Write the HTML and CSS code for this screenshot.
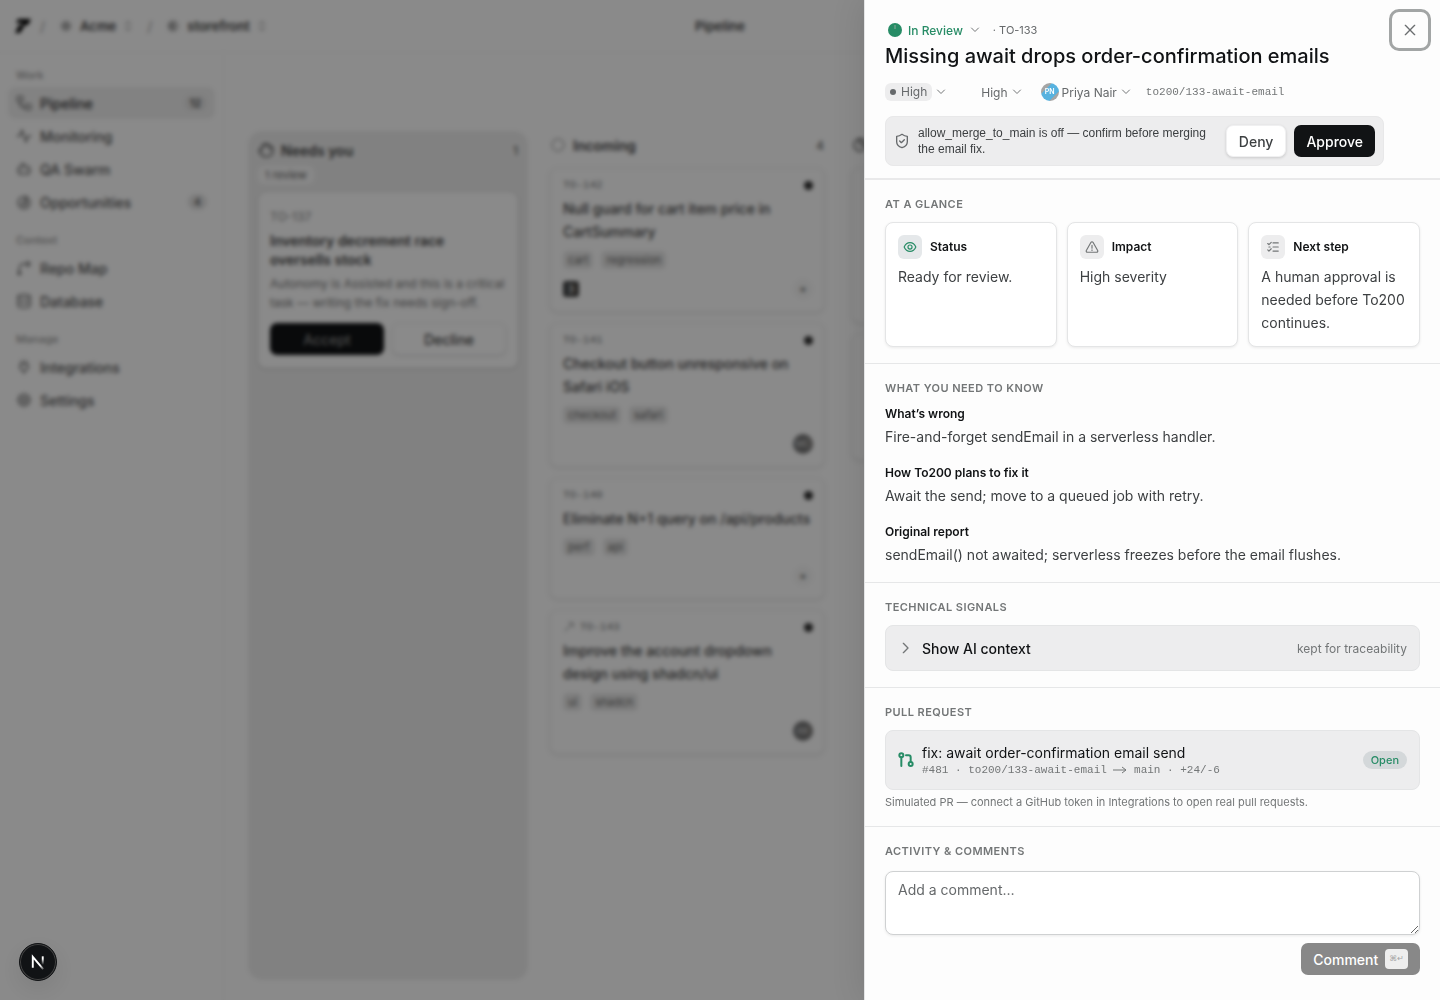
FILE: index.html
```html
<!DOCTYPE html>
<html lang="en">
<head>
  <meta charset="UTF-8" />
  <meta name="viewport" content="width=device-width, initial-scale=1.0"/>
  <title>Pipeline - storefront</title>
  <link rel="stylesheet" href="styles.css">
</head>
<body>

  <div class="app">
    <header class="topbar">
      <div class="crumbs">
        <svg class="logo" viewBox="0 0 18 18"><path d="M4 2h13l-3 6h-3l-5 8H1l4-8h3l1-2H2z" fill="#000"/></svg>
        <span class="slash">/</span>
        <button class="crumb">
          <svg class="icon" viewBox="0 0 24 24"><circle cx="12" cy="12" r="9" fill="#ddd" stroke="none"/><path d="M12 7l5 5-5 5-5-5z"/></svg>
          Acme
          <svg class="icon small" viewBox="0 0 24 24"><path d="M7 9l5-6 5 6M7 15l5 6 5-6"/></svg>
        </button>
        <span class="slash">/</span>
        <button class="crumb">
          <svg class="icon" viewBox="0 0 24 24"><circle cx="12" cy="12" r="9" fill="#ccc" stroke="none"/><path d="M12 6v12M8 9v6"/></svg>
          storefront
          <svg class="icon small" viewBox="0 0 24 24"><path d="M7 9l5-6 5 6M7 15l5 6 5-6"/></svg>
        </button>
      </div>
      <h1 class="page-title">Pipeline</h1>
      <div></div>
    </header>

    <div class="workspace">
      <nav class="sidebar">
        <div class="nav-group">
          <h2 class="nav-label">Work</h2>
          <a href="#" class="nav-item active">
            <svg class="icon" viewBox="0 0 24 24"><rect x="2" y="2" width="8" height="8" rx="2"/><path d="M6 10v4a4 4 0 0 0 4 4h4"/><rect x="14" y="14" width="8" height="8" rx="2"/></svg>
            Pipeline <span class="count">12</span>
          </a>
          <a href="#" class="nav-item">
            <svg class="icon" viewBox="0 0 24 24"><path d="M2 12h4l3-9 6 18 3-9h4"/></svg>
            Monitoring
          </a>
          <a href="#" class="nav-item">
            <svg class="icon" viewBox="0 0 24 24"><path d="M12 8V4H8M2 14h2M20 14h2M9 13v2M15 13v2"/><rect x="4" y="8" width="16" height="12" rx="2"/></svg>
            QA Swarm
          </a>
          <a href="#" class="nav-item">
            <svg class="icon" viewBox="0 0 24 24"><circle cx="12" cy="13" r="9"/><path d="M12 13l4-10M8 13a4 4 0 1 0 4-4"/></svg>
            Opportunities <span class="count">4</span>
          </a>
        </div>
        <div class="nav-group">
          <h2 class="nav-label">Context</h2>
          <a href="#" class="nav-item">
            <svg class="icon" viewBox="0 0 24 24"><path d="M5 21v-9a6 6 0 0 1 6-6h10M17 2l4 4-4 4"/><circle cx="5" cy="20" r="2"/></svg>
            Repo Map
          </a>
          <a href="#" class="nav-item">
            <svg class="icon" viewBox="0 0 24 24"><ellipse cx="12" cy="5" rx="9" ry="3"/><path d="M3 5v14a9 3 0 0 0 18 0V5M3 12a9 3 0 0 0 18 0"/></svg>
            Database
          </a>
        </div>
        <div class="nav-group">
          <h2 class="nav-label">Manage</h2>
          <a href="#" class="nav-item">
            <svg class="icon" viewBox="0 0 24 24"><path d="M12 22v-5M9 7V2M15 7V2M6 8h12v4a5 5 0 0 1-5 5h-2a5 5 0 0 1-5-5z"/></svg>
            Integrations
          </a>
          <a href="#" class="nav-item">
            <svg class="icon" viewBox="0 0 24 24"><circle cx="12" cy="12" r="8"/><circle cx="12" cy="12" r="3"/><path d="M12 2v2M12 20v2M2 12h2M20 12h2M5 5l1 1M18 18l1 1M5 19l1-1M18 6l1-1"/></svg>
            Settings
          </a>
        </div>
      </nav>

      <main class="board">
        <section class="column needs">
          <div class="column-head">
            <svg class="icon" viewBox="0 0 24 24"><path d="M18 11V6a2 2 0 0 0-4 0V4a2 2 0 0 0-4 0v2a2 2 0 0 0-4 0v6l-2-1a2 2 0 0 0-2 3l3 5a8 8 0 0 0 7 3h2a8 8 0 0 0 8-8V9a2 2 0 0 0-4 0"/></svg>
            Needs you <span class="total">1</span>
          </div>
          <span class="review-chip">1 review</span>
          <article class="ask">
            <div class="task-id">TO-137</div>
            <h3>Inventory decrement race oversells stock</h3>
            <p>Autonomy is Assisted and this is a critical task — writing the fix needs sign-off.</p>
            <div class="ask-actions">
              <button class="btn dark">Accept</button>
              <button class="btn light">Decline</button>
            </div>
          </article>
        </section>

        <section class="column">
          <div class="column-head">
            <svg class="icon faint" viewBox="0 0 24 24"><circle cx="12" cy="12" r="9" stroke-dasharray="4 3"/></svg>
            Incoming <span class="total">4</span>
          </div>
          <div class="tasks">
            <article class="task">
              <div class="task-id">TO-142 <i class="priority"></i></div>
              <h3>Null guard for cart item price in CartSummary</h3>
              <div class="tags"><span>cart</span><span>regression</span></div>
              <div class="task-foot"><span class="source">3</span><span class="assign">+</span></div>
            </article>
            <article class="task">
              <div class="task-id">TO-141 <i class="priority"></i></div>
              <h3>Checkout button unresponsive on Safari iOS</h3>
              <div class="tags"><span>checkout</span><span>safari</span></div>
              <div class="task-foot"><span class="person">MC</span></div>
            </article>
            <article class="task">
              <div class="task-id">TO-140 <i class="priority"></i></div>
              <h3>Eliminate N+1 query on /api/products</h3>
              <div class="tags"><span>perf</span><span>api</span></div>
              <div class="task-foot"><span class="assign">+</span></div>
            </article>
            <article class="task">
              <div class="task-id">
                <svg class="icon small" viewBox="0 0 24 24"><path d="M4 20L15 9M12 4h8v8"/></svg>
                TO-143 <i class="priority"></i>
              </div>
              <h3>Improve the account dropdown design using shadcn/ui</h3>
              <div class="tags"><span>ui</span><span>shadcn</span></div>
              <div class="task-foot"><span class="person">AK</span></div>
            </article>
          </div>
        </section>

        <section class="column">
          <div class="column-head">
            <svg class="icon" viewBox="0 0 24 24"><circle cx="12" cy="12" r="9"/><path d="M12 12V3a9 9 0 0 1 9 9z"/></svg>
          </div>
          <div class="tasks">
            <article class="task tall"></article>
            <article class="task short"></article>
          </div>
        </section>
      </main>
    </div>
  </div>

  <div class="overlay"></div>

  <button class="dev-badge" aria-label="Open developer tools">
    <svg viewBox="0 0 38 38">
      <defs>
        <linearGradient id="fade" x1="0" y1="0" x2="0" y2="1"><stop offset="0.3" stop-color="#fff"/><stop offset="1" stop-color="#fff" stop-opacity="0"/></linearGradient>
        <linearGradient id="fadeEnd" x1="0" y1="0" x2="1" y2="1"><stop offset="0.7" stop-color="#fff"/><stop offset="1" stop-color="#fff" stop-opacity="0.3"/></linearGradient>
      </defs>
      <path d="M13.500 25V13.500L24.500 26.500" fill="none" stroke="url(#fadeEnd)" stroke-width="2"/>
      <rect x="23" y="13" width="2" height="9" fill="url(#fade)"/>
    </svg>
  </button>

  <aside class="drawer" role="dialog" aria-labelledby="drawerTitle">
    <header class="drawer-head">
      <button class="close" aria-label="Close">
        <svg class="icon" viewBox="0 0 24 24"><path d="M5 5l14 14M19 5L5 19"/></svg>
      </button>
      <div class="status-row">
        <button class="status">
          <svg class="status-dot" viewBox="0 0 14 14"><circle cx="7" cy="7" r="7" fill="#278c66"/><path d="M7 2v4" stroke="#8fa99c"/></svg>
          In Review
          <svg class="icon chevron" viewBox="0 0 24 24"><path d="M5 8l7 7 7-7"/></svg>
        </button>
        <span class="ticket">· TO-133</span>
      </div>
      <h2 class="drawer-title" id="drawerTitle">Missing await drops order-confirmation emails</h2>
      <div class="meta">
        <button class="pick"><span class="level"><i></i>High</span><svg class="icon chevron" viewBox="0 0 24 24"><path d="M5 8l7 7 7-7"/></svg></button>
        <button class="pick severity">High<svg class="icon chevron" viewBox="0 0 24 24"><path d="M5 8l7 7 7-7"/></svg></button>
        <button class="pick"><span class="avatar">PN</span>Priya Nair<svg class="icon chevron" viewBox="0 0 24 24"><path d="M5 8l7 7 7-7"/></svg></button>
        <code>to200/133-await-email</code>
      </div>
      <div class="gate">
        <svg class="icon" viewBox="0 0 24 24"><path d="M20 13c0 5-3.500 7.500-8 9-4.500-1.500-8-4-8-9V5c3 0 5.500-1 8-3 2.500 2 5 3 8 3z"/><path d="M8.500 12l2.500 2.500 4.500-4.500"/></svg>
        <p>allow_merge_to_main is off — confirm before merging the email fix.</p>
        <button class="btn light">Deny</button>
        <button class="btn dark">Approve</button>
      </div>
    </header>

    <section class="block">
      <h3 class="label">At a glance</h3>
      <div class="glance">
        <div class="glance-card">
          <h4><span class="tile green"><svg class="icon" viewBox="0 0 24 24"><path d="M2 12c2-5 6-7.500 10-7.500S20 7 22 12c-2 5-6 7.500-10 7.500S4 17 2 12z"/><circle cx="12" cy="12" r="3.500"/></svg></span>Status</h4>
          <p>Ready for review.</p>
        </div>
        <div class="glance-card">
          <h4><span class="tile"><svg class="icon" viewBox="0 0 24 24"><path d="M10.300 4L2.300 18a2 2 0 0 0 1.700 3h16a2 2 0 0 0 1.700-3L13.700 4a2 2 0 0 0-3.400 0zM12 9v5M12 17v1"/></svg></span>Impact</h4>
          <p>High severity</p>
        </div>
        <div class="glance-card">
          <h4><span class="tile"><svg class="icon" viewBox="0 0 24 24"><path d="M12 5h9M12 12h9M12 19h9M3 17l2 2 4-4M3 6l2 2 4-4M5 12h2"/></svg></span>Next step</h4>
          <p>A human approval is needed before To200 continues.</p>
        </div>
      </div>
    </section>

    <section class="block">
      <h3 class="label">What you need to know</h3>
      <div class="facts">
        <div>
          <h4>What’s wrong</h4>
          <p>Fire-and-forget sendEmail in a serverless handler.</p>
        </div>
        <div>
          <h4>How To200 plans to fix it</h4>
          <p>Await the send; move to a queued job with retry.</p>
        </div>
        <div>
          <h4>Original report</h4>
          <p>sendEmail() not awaited; serverless freezes before the email flushes.</p>
        </div>
      </div>
    </section>

    <section class="block">
      <h3 class="label">Technical signals</h3>
      <button class="context">
        <svg class="icon" viewBox="0 0 24 24"><path d="M8 5l7 7-7 7"/></svg>
        Show AI context
        <span>kept for traceability</span>
      </button>
    </section>

    <section class="block">
      <h3 class="label">Pull request</h3>
      <a href="#" class="pr">
        <svg class="icon" viewBox="0 0 24 24"><circle cx="5" cy="5" r="3"/><circle cx="19" cy="18" r="3"/><path d="M5 8v13M12 5h4a3 3 0 0 1 3 3v7"/></svg>
        <div class="pr-text">
          <div class="pr-title">fix: await order-confirmation email send</div>
          <div class="pr-meta">#481 · to200/133-await-email <svg class="arrow" viewBox="0 0 14 10"><path d="M0 5h13M9 2l4 3-4 3"/></svg> main · +24/-6</div>
        </div>
        <span class="open">Open</span>
      </a>
      <p class="note">Simulated PR — connect a GitHub token in Integrations to open real pull requests.</p>
    </section>

    <section class="block">
      <h3 class="label"><label for="comment">Activity &amp; comments</label></h3>
      <textarea id="comment" class="comment" placeholder="Add a comment…"></textarea>
      <div class="comment-actions">
        <button class="btn send">Comment <kbd>⌘↵</kbd></button>
      </div>
    </section>
  </aside>

</body>
</html>
```
FILE: styles.css
```css
* {
  box-sizing: border-box;
}

body {
  margin: 0;
  font-family: Inter, "Liberation Sans", sans-serif;
  font-size: 14px;
  color: #111315;
  background: #fff;
  overflow: hidden;
}

h1, h2, h3, h4, p {
  margin: 0;
}

button, textarea {
  font: inherit;
  color: inherit;
}

button {
  border: none;
  background: none;
  padding: 0;
  cursor: pointer;
}

a {
  color: inherit;
  text-decoration: none;
}

code, .pr-meta, .task .task-id {
  font-family: "Liberation Mono", monospace;
  font-size: 11px;
  color: #737677;
}

.icon {
  width: 16px;
  height: 16px;
  flex: none;
  fill: none;
  stroke: currentColor;
  stroke-width: 2;
  stroke-linecap: round;
  stroke-linejoin: round;
}

.icon.small,
.icon.chevron {
  width: 12px;
  height: 12px;
}

/* App behind the drawer */
.app {
  height: 100vh;
  display: flex;
  flex-direction: column;
  color: #444;
}

.topbar {
  display: grid;
  grid-template-columns: 1fr auto 1fr;
  align-items: center;
  height: 53px;
  padding: 0 14px;
  border-bottom: 1px solid #f9f9f9;
}

.crumbs {
  display: flex;
  align-items: center;
  gap: 8px;
}

.logo {
  width: 18px;
  height: 18px;
}

.slash {
  color: #999;
}

.crumb {
  display: flex;
  align-items: center;
  gap: 6px;
  font-size: 13px;
  font-weight: 600;
  padding: 0 5px;
}

.crumb .icon {
  color: #777;
}

.page-title {
  font-size: 13px;
  font-weight: 600;
}

.workspace {
  flex: 1;
  display: flex;
  min-height: 0;
}

.sidebar {
  width: 224px;
  flex: none;
  padding: 12px 8px;
  border-right: 1px solid #f9f9f9;
}

.nav-group {
  display: flex;
  flex-direction: column;
  gap: 1px;
  margin-bottom: 12px;
}

.nav-label {
  padding-left: 8px;
  font-size: 11px;
  line-height: 21px;
  font-weight: 500;
  color: #999;
}

.nav-item {
  display: flex;
  align-items: center;
  gap: 8px;
  height: 32px;
  padding: 0 8px;
  border-radius: 8px;
  font-weight: 500;
  color: #555;
}

.nav-item .icon {
  color: #666;
}

.nav-item.active {
  background: #f0f0f0;
  color: #333;
}

.count {
  margin-left: auto;
  padding: 0 6px;
  border-radius: 8px;
  background: #e4e4e4;
  font-size: 11px;
  line-height: 16px;
}

.board {
  flex: 1;
  display: flex;
  gap: 22px;
  padding: 78px 24px 20px;
  overflow: hidden;
}

.column {
  width: 280px;
  flex: none;
  padding: 5px 6px 0 0;
}

.column.needs {
  padding: 10px;
  border-radius: 14px;
  background: #efefef;
}

.column-head {
  display: flex;
  align-items: center;
  gap: 7px;
  height: 18px;
  margin-bottom: 14px;
  font-weight: 600;
}

.needs .column-head {
  margin-bottom: 7px;
}

.faint {
  color: #999;
}

.total {
  margin-left: auto;
  font-size: 12px;
  color: #777;
}

.review-chip {
  display: block;
  width: fit-content;
  padding: 0 7px;
  border-radius: 5px;
  background: #fafafa;
  font-size: 11px;
  line-height: 18px;
  color: #666;
}

.ask,
.task {
  background: #fff;
  border: 1px solid #f3f3f3;
  border-radius: 8px;
  box-shadow: 0 1px 4px rgba(0,0,0,0.12);
}

.ask {
  margin-top: 8px;
  padding: 16px 11px 12px;
}

.task-id {
  display: flex;
  align-items: center;
  gap: 5px;
  font-size: 12px;
  line-height: 16px;
  color: #888;
}

.ask h3 {
  margin-top: 6px;
  font-size: 14px;
  line-height: 19px;
  font-weight: 600;
}

.ask p {
  margin: 5px 0 11px;
  font-size: 12px;
  line-height: 19px;
  color: #777;
}

.ask-actions {
  display: grid;
  grid-template-columns: 1fr 1fr;
  gap: 8px;
}

.ask-actions .dark {
  color: #888;
}

.tasks {
  display: flex;
  flex-direction: column;
  gap: 11px;
}

.task {
  padding: 8px 10px 12px 12px;
}

.task.tall {
  height: 155px;
}

.task.short {
  height: 126px;
}

.task h3 {
  margin: 4px 0 8px;
  font-size: 14px;
  line-height: 23px;
  font-weight: 500;
}

.priority {
  width: 9px;
  height: 9px;
  margin-left: auto;
  border-radius: 50%;
  background: #333;
}

.tags {
  display: flex;
  gap: 8px;
}

.tags span {
  padding: 0 5px;
  border-radius: 5px;
  background: #e8e8e8;
  font-size: 11px;
  line-height: 18px;
  color: #666;
}

.task-foot {
  display: flex;
  align-items: center;
  height: 20px;
  margin-top: 10px;
}

.source {
  width: 16px;
  border-radius: 3px;
  background: #444;
  color: #fff;
  font-size: 11px;
  line-height: 16px;
  text-align: center;
}

.assign,
.person {
  width: 20px;
  height: 20px;
  margin-left: auto;
  border-radius: 50%;
  font-size: 9px;
  line-height: 20px;
  text-align: center;
}

.assign {
  background: #f7f7f7;
  font-size: 12px;
}

.person {
  background: #777;
  color: #ddd;
}

/* Dimmed backdrop */
.overlay {
  position: fixed;
  inset: 0;
  background: rgba(0,0,0,0.46);
  backdrop-filter: blur(2px);
}

.dev-badge {
  position: fixed;
  left: 19px;
  bottom: 19px;
  width: 38px;
  height: 38px;
  border-radius: 50%;
  background: #111315;
  border: 1px solid #111315;
  box-shadow: inset 0 0 0 1px #444, 0 8px 20px rgba(0,0,0,0.08);
}

.dev-badge svg {
  display: block;
  width: 36px;
  height: 36px;
}

/* Drawer */
.drawer {
  position: fixed;
  top: 0;
  right: 0;
  bottom: 0;
  width: 40%;
  min-width: 480px;
  overflow: auto;
  background: #fdfdfd;
  border-left: 1px solid #e4e5e6;
  box-shadow: 0 0 32px rgba(0,0,0,0.12);
}

.drawer-head {
  padding: 22px 56px 12px 20px;
  border-bottom: 2px solid #e9e9ea;
}

.close {
  position: absolute;
  top: 9px;
  right: 9px;
  width: 42px;
  height: 42px;
  display: grid;
  place-items: center;
  border: 3px solid #a2a5a5;
  border-radius: 10px;
  color: #6b6e70;
}

.status-row {
  display: flex;
  align-items: center;
  gap: 12px;
  height: 16px;
  padding-left: 3px;
  font-size: 12px;
}

.status {
  display: flex;
  align-items: center;
  gap: 6px;
  font-weight: 500;
  color: #278c66;
}

.status-dot {
  width: 14px;
  height: 14px;
}

.chevron {
  color: #737677;
}

.ticket {
  font-size: 11px;
  color: #66696b;
}

.drawer-title {
  margin: 5px 0 11px;
  font-size: 20px;
  line-height: 27px;
  font-weight: 500;
}

.meta {
  display: flex;
  align-items: center;
  gap: 14px;
  height: 22px;
  font-size: 12px;
  color: #66696b;
}

.pick {
  display: flex;
  align-items: center;
  gap: 3px;
}

.severity {
  margin: 0 4px 0 20px;
}

.level {
  display: flex;
  align-items: center;
  gap: 5px;
  padding: 0 5px;
  border-radius: 6px;
  background: #ededee;
  line-height: 18px;
}

.level i {
  width: 6px;
  height: 6px;
  border-radius: 50%;
  background: #66696b;
}

.avatar {
  width: 18px;
  height: 18px;
  border-radius: 50%;
  background: linear-gradient(135deg, #a5a5a5 30%, #57b2df 31%, #57b2df 72%, #a5a5a5 73%);
  color: #fff;
  font-size: 7px;
  line-height: 18px;
  font-weight: 600;
}

.gate {
  display: flex;
  align-items: center;
  gap: 8px;
  margin-top: 13px;
  padding: 8px;
  border: 1px solid #e8e8e9;
  border-radius: 8px;
  background: #ededee;
  color: #3c3f41;
}

.gate p {
  flex: 1;
  font-family: "Liberation Sans", sans-serif;
  font-size: 12px;
  line-height: 16px;
}

.gate .icon {
  color: #66696b;
}

.btn {
  height: 32px;
  padding: 0 12px;
  border-radius: 7px;
  font-weight: 500;
}

.btn.dark {
  background: #111315;
  color: #fff;
}

.btn.light {
  background: #fff;
  border: 1px solid #f0f0f1;
  box-shadow: 0 1px 3px rgba(0,0,0,0.15);
}

.ask-actions .btn.dark {
  color: #888;
}

.block {
  padding: 16px 20px;
  border-bottom: 1px solid #e6e7e8;
}

.block:last-child {
  border-bottom: none;
}

.label {
  margin-bottom: 10px;
  font-size: 11px;
  line-height: 16px;
  font-weight: 600;
  text-transform: uppercase;
  letter-spacing: 0.04em;
  color: #737677;
}

.block p {
  line-height: 23px;
  color: #3c3f41;
}

.block h4 {
  font-size: 12px;
  line-height: 16px;
  font-weight: 600;
}

.glance {
  display: grid;
  grid-template-columns: repeat(3, 1fr);
  gap: 10px;
}

.glance-card {
  padding: 12px;
  background: #fff;
  border: 1px solid #e4e5e6;
  border-radius: 8px;
  box-shadow: 0 1px 3px rgba(0,0,0,0.08);
}

.glance-card h4 {
  display: flex;
  align-items: center;
  gap: 8px;
  margin-bottom: 6px;
}

.tile {
  width: 24px;
  height: 24px;
  display: grid;
  place-items: center;
  border-radius: 6px;
  background: #ededee;
  color: #737677;
}

.tile .icon {
  width: 14px;
  height: 14px;
}

.tile.green {
  background: #e5e8ea;
  color: #278c66;
}

.facts {
  display: flex;
  flex-direction: column;
  gap: 17px;
}

.facts h4 {
  margin-bottom: 3px;
}

.context,
.pr {
  display: flex;
  align-items: center;
  gap: 8px;
  width: 100%;
  padding: 0 12px;
  border: 1px solid #e4e5e6;
  border-radius: 8px;
  background: #ededee;
}

.context {
  height: 46px;
  font-weight: 500;
}

.context .icon {
  color: #737677;
}

.context span {
  margin-left: auto;
  font-size: 12px;
  font-weight: 400;
  color: #737677;
}

.pr {
  height: 60px;
}

.pr .icon {
  color: #278c66;
  stroke-width: 3;
}

.pr-text {
  flex: 1;
}

.pr-title {
  line-height: 19px;
}

.pr-meta {
  line-height: 16px;
}

.arrow {
  width: 14px;
  height: 10px;
  fill: none;
  stroke: currentColor;
  vertical-align: middle;
}

.open {
  padding: 0 8px;
  border-radius: 9px;
  background: #d4d8da;
  font-size: 11px;
  line-height: 18px;
  font-weight: 500;
  color: #278c66;
}

.block .note {
  margin-top: 4px;
  font-size: 11px;
  line-height: 16px;
  color: #737677;
}

.comment {
  display: block;
  width: 100%;
  height: 64px;
  margin-top: 12px;
  padding: 9px 12px;
  border: 1px solid #cfd1d2;
  border-radius: 8px;
  background: #fff;
  box-shadow: 0 1px 3px rgba(0,0,0,0.08);
  resize: vertical;
}

.comment::placeholder {
  color: #66696b;
}

.comment-actions {
  display: flex;
  justify-content: flex-end;
  margin-top: 8px;
}

.send {
  display: flex;
  align-items: center;
  gap: 7px;
  background: #888;
  color: #fff;
}

.send kbd {
  padding: 0 4px;
  border-radius: 4px;
  background: #eee;
  color: #a5a5a5;
  font-family: "DejaVu Sans", sans-serif;
  font-size: 8px;
  line-height: 20px;
}
```
